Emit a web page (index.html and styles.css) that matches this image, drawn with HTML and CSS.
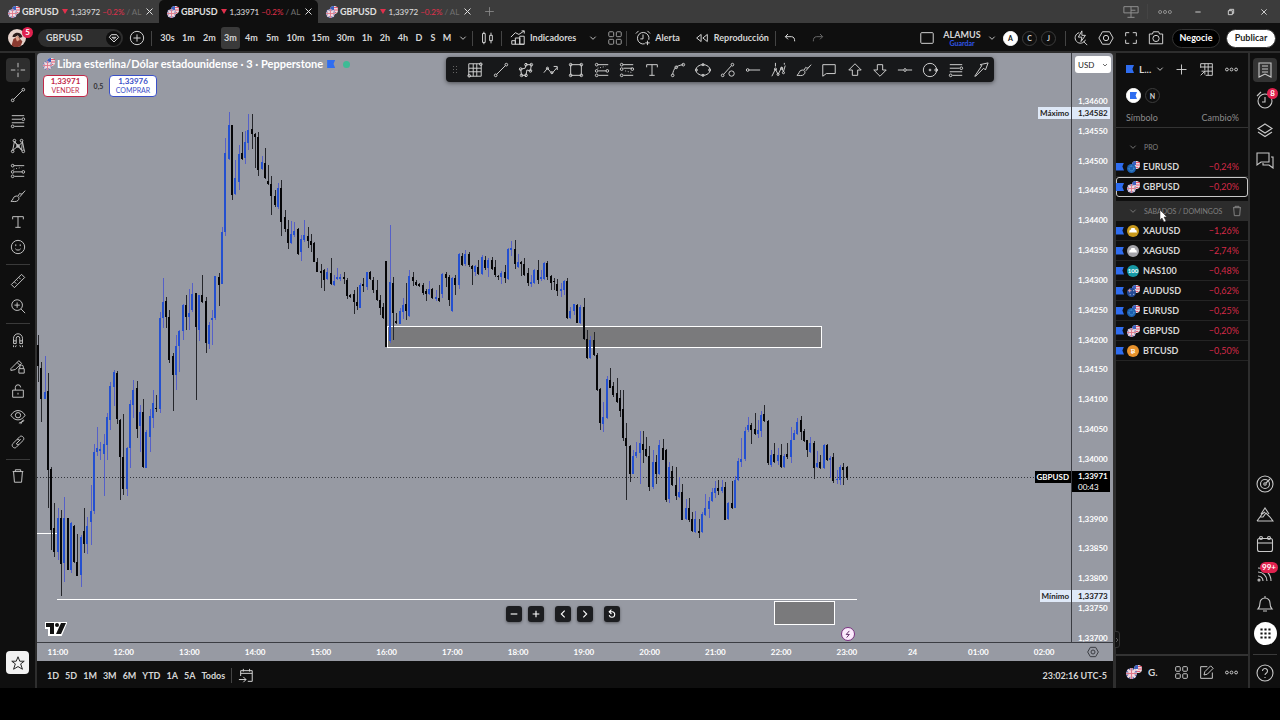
FILE: index.html
```html
<!DOCTYPE html>
<html lang="es">
<head>
    <meta charset="UTF-8">
    <meta name="viewport" content="width=device-width, initial-scale=1.0">
    <title>GBPUSD 1,33971</title>
    <link rel="stylesheet" href="styles.css">
</head>
<body>

<!-- Icon set -->
<svg class="sprite" aria-hidden="true">
    <symbol id="i-cross" viewBox="0 0 18 18"><path d="M9 1v5M9 12v5M1 9h5M12 9h5M9 8.500v1"/></symbol>
    <symbol id="i-line" viewBox="0 0 18 18"><path d="M4 14L14 4"/><circle cx="3" cy="15" r="1.500"/><circle cx="15" cy="3" r="1.500"/></symbol>
    <symbol id="i-fib" viewBox="0 0 18 18"><path d="M2 3h14M2 7h11M2 11h14M5 15h11"/><circle cx="15" cy="7" r="1.500"/><circle cx="3" cy="15" r="1.500"/></symbol>
    <symbol id="i-pattern" viewBox="0 0 18 18"><path d="M3 14L5 4l8 10 1-10 2 10M3 14l11-9M5 4l8 9"/><circle cx="3" cy="15" r="1.500"/><circle cx="5" cy="3" r="1.500"/><circle cx="13" cy="3" r="1.500"/><circle cx="15" cy="15" r="1.500"/><circle cx="9" cy="9" r="1.500"/></symbol>
    <symbol id="i-long" viewBox="0 0 18 18"><path d="M4 3h12M5 10h9M5 15h11"/><path d="M4 7l9-2" stroke-dasharray="1 2"/><circle cx="3" cy="3" r="1.500"/><circle cx="3" cy="10" r="1.500"/><circle cx="15" cy="10" r="1.500"/><circle cx="3" cy="15" r="1.500"/></symbol>
    <symbol id="i-short" viewBox="0 0 18 18"><path d="M4 3h12M5 7h10M5 15h11"/><path d="M7 10l8 2" stroke-dasharray="1 2"/><circle cx="3" cy="3" r="1.500"/><circle cx="3" cy="8" r="1.500"/><circle cx="15" cy="8" r="1.500"/><circle cx="3" cy="15" r="1.500"/></symbol>
    <symbol id="i-brush" viewBox="0 0 18 18"><path d="M1 15c3-1 2-6 6-6 3 0 4 3 2 5s-5 1-8 1zM9 9l2-3M11 10l6-7M11 6c1 1 2 1 3 0"/></symbol>
    <symbol id="i-text" viewBox="0 0 18 18"><path d="M3 6V3h12v3M9 3v12M6 15h6"/></symbol>
    <symbol id="i-smile" viewBox="0 0 18 18"><circle cx="9" cy="9" r="7.500"/><path d="M6 11c1 2 5 2 6 0M6.500 6v2M11.500 6v2"/></symbol>
    <symbol id="i-ruler" viewBox="0 0 18 18"><path d="M1.500 13L13 1.500 16.500 5 5 16.500zM5 10l2 2M7.500 7.500l1 1M10 5l2 2"/></symbol>
    <symbol id="i-zoom" viewBox="0 0 18 18"><circle cx="8" cy="8" r="6"/><path d="M12.500 12.500L17 17M8 5v6M5 8h6"/></symbol>
    <symbol id="i-magnet" viewBox="0 0 18 18"><path d="M4 13V7a5 5 0 0 1 10 0v6h-3V7a2 2 0 0 0-4 0v6zM4 10h3M11 10h3M4 15v2M7 15l-1 2M11 15l1 2M14 15v2"/></symbol>
    <symbol id="i-pencillock" viewBox="0 0 18 18"><path d="M1 12L10 3l3 3-7 7-5 1zM8 5l3 3"/><path d="M10 12h6v5h-6zM11 12v-2a2 2 0 0 1 4 0v2"/></symbol>
    <symbol id="i-lock" viewBox="0 0 18 18"><path d="M3 8h12v8H3zM6 8V5a3 3 0 0 1 6 0M9 11v2"/></symbol>
    <symbol id="i-eye" viewBox="0 0 18 18"><path d="M1 7c4-7 12-7 16 0-4 7-12 7-16 0z"/><circle cx="9" cy="7" r="3"/><path d="M10 16l6-3M12 17l3-5"/></symbol>
    <symbol id="i-link" viewBox="0 0 18 18"><path d="M7 11l5-5M8 6l3-3c2-2 6 1 4 4l-4 4c-1 1-3 1-4 0M10 12l-3 3c-2 2-6-1-4-4l4-4c1-1 3-1 4 0"/></symbol>
    <symbol id="i-trash" viewBox="0 0 18 18"><path d="M3 4h12M6 4V2h6v2M4 4l1 12h8l1-12"/></symbol>
    <symbol id="i-star" viewBox="0 0 18 18"><path d="M9 2l2 5h5l-4 3 2 6-5-3-5 3 2-6-4-3h5z"/></symbol>
    <symbol id="i-plus" viewBox="0 0 18 18"><path d="M9 3v12M3 9h12"/></symbol>
    <symbol id="i-minus" viewBox="0 0 18 18"><path d="M3 9h12"/></symbol>
    <symbol id="i-pluscircle" viewBox="0 0 18 18"><circle cx="9" cy="9" r="7.500"/><path d="M9 5v8M5 9h8"/></symbol>
    <symbol id="i-close" viewBox="0 0 18 18"><path d="M3 3l12 12M15 3L3 15"/></symbol>
    <symbol id="i-chev" viewBox="0 0 18 18"><path d="M3 6l6 6 6-6"/></symbol>
    <symbol id="i-left" viewBox="0 0 18 18"><path d="M12 3L6 9l6 6"/></symbol>
    <symbol id="i-right" viewBox="0 0 18 18"><path d="M6 3l6 6-6 6"/></symbol>
    <symbol id="i-reset" viewBox="0 0 18 18"><path d="M5 5h5a5 5 0 1 1-6 6M8 1L4 5l4 4"/></symbol>
    <symbol id="i-gem" viewBox="0 0 18 18"><path d="M5 4h8l3 4-7 7-7-7zM6 8h6l-3 3z"/></symbol>
    <symbol id="i-candles" viewBox="0 0 18 18"><path d="M4 4h3v10H4zM5.500 2v2M5.500 14v2M12 6h3v6h-3zM13.500 3v3M13.500 12v3"/></symbol>
    <symbol id="i-indic" viewBox="0 0 18 18"><path d="M2 16v-4h4v4M6 16V9h5v7M11 16V7h5v9zM2 16h14M1 8l5-5 4 2 6-4M13 1h3v3"/></symbol>
    <symbol id="i-four" viewBox="0 0 18 18"><rect x="2" y="2" width="5.500" height="5.500" rx="1"/><rect x="10.500" y="2" width="5.500" height="5.500" rx="1"/><rect x="2" y="10.500" width="5.500" height="5.500" rx="1"/><rect x="10.500" y="10.500" width="5.500" height="5.500" rx="1"/></symbol>
    <symbol id="i-alarm" viewBox="0 0 18 18"><path d="M11 15.500A6.500 6.500 0 1 1 15.500 11M9 5v5H6M1 4l3-3M14 1l3 3M14 12v5M11.500 14.500h5"/></symbol>
    <symbol id="i-replay" viewBox="0 0 18 18"><path d="M8 5L3 9l5 4zM15 5l-5 4 5 4z"/></symbol>
    <symbol id="i-undo" viewBox="0 0 18 18"><path d="M6 3L2 7l4 4M2 7h9c4 0 5 3 5 7"/></symbol>
    <symbol id="i-redo" viewBox="0 0 18 18"><path d="M12 3l4 4-4 4M16 7H7c-4 0-5 3-5 7"/></symbol>
    <symbol id="i-square" viewBox="0 0 18 18"><rect x="2" y="3" width="14" height="12" rx="1"/></symbol>
    <symbol id="i-search" viewBox="0 0 18 18"><path d="M7 3a6 6 0 1 0 7 8M12 13l4 4M10 1L6 8h4l-1 5 5-7h-4z"/></symbol>
    <symbol id="i-hex" viewBox="0 0 18 18"><path d="M5 2h8l4 7-4 7H5L1 9z"/><circle cx="9" cy="9" r="3"/></symbol>
    <symbol id="i-full" viewBox="0 0 18 18"><path d="M3 7V3h4M11 3h4v4M15 11v4h-4M7 15H3v-4"/></symbol>
    <symbol id="i-camera" viewBox="0 0 18 18"><path d="M1.500 4.500H5L6 2h6l1 2.500h3.500v11h-15z"/><circle cx="9" cy="9.500" r="3.500"/></symbol>
    <symbol id="i-grid" viewBox="0 0 18 18"><path d="M2 2h14v14H2zM2 7h14M2 11h14M7 2v14M11 2v14"/><circle cx="2.500" cy="15.500" r="1.500"/><circle cx="15.500" cy="2.500" r="1.500"/></symbol>
    <symbol id="i-poly" viewBox="0 0 18 18"><path d="M4 15l-1-7 5-1 1-4h6l-1 7-4-1-1 6z"/><circle cx="4" cy="15" r="1.500"/><circle cx="3" cy="8" r="1.500"/><circle cx="9" cy="3" r="1.500"/><circle cx="15" cy="3" r="1.500"/><circle cx="14" cy="10" r="1.500"/><circle cx="9" cy="15" r="1.500"/></symbol>
    <symbol id="i-zig" viewBox="0 0 18 18"><path d="M1 12l4-5 5 6 6-7M12 5h4v4"/><circle cx="5" cy="7" r="1.200"/><circle cx="10" cy="12" r="1.200"/></symbol>
    <symbol id="i-rect" viewBox="0 0 18 18"><path d="M3 3h12v12H3z"/><circle cx="3" cy="3" r="1.500"/><circle cx="15" cy="3" r="1.500"/><circle cx="3" cy="15" r="1.500"/><circle cx="15" cy="15" r="1.500"/></symbol>
    <symbol id="i-curve" viewBox="0 0 18 18"><path d="M3 14c1-7 4-10 12-11"/><circle cx="3" cy="15" r="1.500"/><circle cx="7" cy="6" r="1.500"/><circle cx="15" cy="3" r="1.500"/></symbol>
    <symbol id="i-ellipse" viewBox="0 0 18 18"><ellipse cx="9" cy="9" rx="8" ry="6"/><circle cx="9" cy="3" r="1.200"/><circle cx="9" cy="15" r="1.200"/><circle cx="1.500" cy="9" r="1.200"/><circle cx="16.500" cy="9" r="1.200"/></symbol>
    <symbol id="i-measure" viewBox="0 0 18 18"><path d="M4 14L13 4"/><circle cx="3" cy="15" r="1.500"/><circle cx="14" cy="3" r="1.500"/><circle cx="13" cy="13" r="3"/></symbol>
    <symbol id="i-ray" viewBox="0 0 18 18"><path d="M4 9h13"/><circle cx="3" cy="9" r="1.500"/></symbol>
    <symbol id="i-elliott" viewBox="0 0 18 18"><path d="M1 16l4-8 3 6 4-8 2 5 2-7M5 1v4M15 1v2"/><circle cx="5" cy="8" r="1.200"/><circle cx="8" cy="14" r="1.200"/><circle cx="12" cy="7" r="1.200"/><circle cx="14" cy="12" r="1.200"/></symbol>
    <symbol id="i-note" viewBox="0 0 18 18"><path d="M2 3h14v10H6l-4 3z"/></symbol>
    <symbol id="i-up" viewBox="0 0 18 18"><path d="M9 2l7 7h-4v6H6V9H2z"/></symbol>
    <symbol id="i-down" viewBox="0 0 18 18"><path d="M9 16l7-7h-4V3H6v6H2z"/></symbol>
    <symbol id="i-hline" viewBox="0 0 18 18"><path d="M1 9h6M11 9h6"/><circle cx="9" cy="9" r="1.500"/></symbol>
    <symbol id="i-target" viewBox="0 0 18 18"><circle cx="9" cy="9" r="7.500"/><circle cx="9" cy="9" r="1"/><circle cx="16" cy="9" r="1.500"/></symbol>
    <symbol id="i-arrow" viewBox="0 0 18 18"><path d="M2 16l8-12-2-1 9-2-3 8-2-2-9 9z"/></symbol>
    <symbol id="i-dots" viewBox="0 0 18 18"><circle cx="3.500" cy="9" r="1.700"/><circle cx="9" cy="9" r="1.700"/><circle cx="14.500" cy="9" r="1.700"/></symbol>
    <symbol id="i-table" viewBox="0 0 18 18"><path d="M2 7V2h14v14H8M2 6h14M7 2v8M11 2v14M7 11h9M2 16l5-5M3 11h4v4"/></symbol>
    <symbol id="i-list" viewBox="0 0 18 18"><path d="M3 2h12v14l-6-3-6 3zM6 5h6M6 8h6M6 11h6"/></symbol>
    <symbol id="i-clock" viewBox="0 0 18 18"><circle cx="9" cy="10" r="7"/><path d="M9 6v5H6M1 5l4-4"/></symbol>
    <symbol id="i-layers" viewBox="0 0 18 18"><path d="M9 3l7 4.500-7 4.500-7-4.500zM2 11l7 4.500 7-4.500"/></symbol>
    <symbol id="i-chat" viewBox="0 0 18 18"><path d="M1 2h12v9H5l-4 3zM15 6h2v11l-4-3H7v-2"/></symbol>
    <symbol id="i-radar" viewBox="0 0 18 18"><circle cx="9" cy="9" r="8"/><circle cx="9" cy="9" r="4.500"/><circle cx="9" cy="9" r="1.200"/><path d="M10 8l4-4"/></symbol>
    <symbol id="i-pine" viewBox="0 0 18 18"><path d="M1 16h16l-3-4-4-4-3 4-3 0-3 4M5 9l4-6 4 6M4 12l2-3 3-2"/></symbol>
    <symbol id="i-cal" viewBox="0 0 18 18"><rect x="1.500" y="3.500" width="15" height="13" rx="2"/><path d="M2 8h14"/><circle cx="5" cy="3" r="1.500"/><circle cx="13" cy="3" r="1.500"/></symbol>
    <symbol id="i-rss" viewBox="0 0 18 18"><path d="M2 11a5 5 0 0 1 5 5M2 7a9 9 0 0 1 9 9M2 3a13 13 0 0 1 13 13"/><circle cx="3" cy="15" r="1"/></symbol>
    <symbol id="i-bell" viewBox="0 0 18 18"><path d="M2 14c2-2 2-3 2-6a5 5 0 0 1 10 0c0 3 0 4 2 6zM7 16h4M9 1v2"/></symbol>
    <symbol id="i-apps" viewBox="0 0 18 18"><path d="M2 3.500h3M7.500 3.500h3M13 3.500h3M2 9h3M7.500 9h3M13 9h3M2 14.500h3M7.500 14.500h3M13 14.500h3" stroke-width="3"/></symbol>
    <symbol id="i-help" viewBox="0 0 18 18"><circle cx="9" cy="9" r="8"/><path d="M6.500 7a2.500 2.500 0 1 1 4 2c-1 .6-1.500 1-1.500 2M9 13v1"/></symbol>
    <symbol id="i-edit" viewBox="0 0 18 18"><path d="M10 2H2v14h14V9M6 12l1-4 7-7 3 3-7 7z"/></symbol>
    <symbol id="i-goto" viewBox="0 0 18 18"><path d="M3 9V3h13v12h-5M3 6h13M6 1v3M13 1v3M1 13h8M6 10l3 3-3 3"/></symbol>
    <symbol id="i-window" viewBox="0 0 18 18"><path d="M1 3h16v7H1zM9 3v12M5 15h8M9 7h5"/></symbol>
    <symbol id="i-restore" viewBox="0 0 18 18"><path d="M3 6h9v9H3zM6 6V3h9v9h-3"/></symbol>
    <symbol id="i-bolt" viewBox="0 0 18 18"><path d="M12 2L5 10h7l-6 7"/></symbol>
    <symbol id="f-us" viewBox="0 0 10 10"><circle cx="5" cy="5" r="5" fill="#f3e9ee"/><path d="M5 2h5M5 5h5M2 8h6" stroke="#e0455e" stroke-width="1.200"/><path d="M5 0a5 5 0 0 0-5 5h5z" fill="#3c5fc0"/></symbol>
    <symbol id="f-gb" viewBox="0 0 10 10"><circle cx="5" cy="5" r="5" fill="#5a6cb0"/><path d="M5 0v10M0 5h10M1.500 1.500l7 7M8.500 1.500l-7 7" stroke="#f5d9de" stroke-width="2"/><path d="M5 0v10M0 5h10" stroke="#e0788a"/></symbol>
    <symbol id="f-eu" viewBox="0 0 10 10"><circle cx="5" cy="5" r="5" fill="#1c5fb0"/><circle cx="5" cy="5" r="2.700" fill="none" stroke="#6cc0e8" stroke-dasharray="1 1"/></symbol>
    <symbol id="f-au" viewBox="0 0 10 10"><circle cx="5" cy="5" r="5" fill="#234a96"/><path d="M1 3h4M3 1v4" stroke="#e6a0ac"/><path d="M3 7.500h1M7 3h1M7 7h1" stroke="#fff"/></symbol>
</svg>

<div class="app">
    <header class="tabbar">
        <div class="tab">
            <span class="flags small"><svg><use href="#f-us"/></svg><svg><use href="#f-gb"/></svg></span>
            <b>GBPUSD</b><i class="tri"></i><span>1,33972</span><span class="red">−0.2%</span><span class="fade">/ AL</span>
            <button class="tab-close" aria-label="Cerrar"><svg class="icon"><use href="#i-close"/></svg></button>
        </div>
        <div class="tab active">
            <span class="flags small"><svg><use href="#f-us"/></svg><svg><use href="#f-gb"/></svg></span>
            <b>GBPUSD</b><i class="tri"></i><span>1,33971</span><span class="red">−0.2%</span><span class="fade">/ AL</span>
            <button class="tab-close" aria-label="Cerrar"><svg class="icon"><use href="#i-close"/></svg></button>
        </div>
        <div class="tab">
            <span class="flags small"><svg><use href="#f-us"/></svg><svg><use href="#f-gb"/></svg></span>
            <b>GBPUSD</b><i class="tri"></i><span>1,33972</span><span class="red">−0.2%</span><span class="fade">/ AL</span>
            <button class="tab-close" aria-label="Cerrar"><svg class="icon"><use href="#i-close"/></svg></button>
        </div>
        <button class="new-tab" aria-label="Nueva pestaña"><svg class="icon"><use href="#i-plus"/></svg></button>
        <div class="window-controls">
            <button aria-label="Ventanas"><svg class="icon"><use href="#i-window"/></svg></button>
            <span class="vsep"></span>
            <button aria-label="Más"><svg class="icon"><use href="#i-dots"/></svg></button>
            <button class="bright" aria-label="Minimizar"><svg class="icon tiny"><use href="#i-minus"/></svg></button>
            <button class="bright" aria-label="Restaurar"><svg class="icon tiny"><use href="#i-restore"/></svg></button>
            <button class="bright" aria-label="Cerrar"><svg class="icon tiny"><use href="#i-close"/></svg></button>
        </div>
    </header>

    <div class="toolbar">
        <button class="avatar" aria-label="Perfil"><svg viewBox="0 0 20 20"><circle cx="10" cy="10" r="10" fill="#e6d3cc"/><path d="M4 18l2-7 5-3 5 6-2 5c-4 2-8 1-10-1z" fill="#8b3a30"/><path d="M5 9c0-6 10-7 11 0l-3 1-2-3-3 2z" fill="#2b1d1c"/><path d="M8 9l3-1 2 4-3 2z" fill="#e0a48c"/></svg><span class="badge">5</span></button>
        <button class="symbol">GBPUSD<span class="gem"><svg class="icon small"><use href="#i-gem"/></svg></span></button>
        <button class="w28" aria-label="Comparar"><svg class="icon"><use href="#i-pluscircle"/></svg></button>
        <span class="vsep"></span>
        <div class="intervals">
            <button>30s</button><button>1m</button><button>2m</button><button class="on">3m</button><button>4m</button><button>5m</button>
            <button>10m</button><button>15m</button><button>30m</button><button>1h</button><button>2h</button><button>4h</button>
            <button>D</button><button>S</button><button>M</button>
        </div>
        <button class="w16" aria-label="Intervalos"><svg class="icon tiny"><use href="#i-chev"/></svg></button>
        <span class="vsep"></span>
        <button class="w28" aria-label="Velas"><svg class="icon"><use href="#i-candles"/></svg></button>
        <span class="vsep"></span>
        <button class="labelled"><svg class="icon"><use href="#i-indic"/></svg>Indicadores</button>
        <button class="w22" aria-label="Plantillas"><svg class="icon tiny"><use href="#i-chev"/></svg></button>
        <button class="w22 dim" aria-label="Diseños"><svg class="icon"><use href="#i-four"/></svg></button>
        <span class="vsep"></span>
        <button class="labelled"><svg class="icon"><use href="#i-alarm"/></svg>Alerta</button>
        <button class="labelled"><svg class="icon"><use href="#i-replay"/></svg>Reproducción</button>
        <span class="vsep"></span>
        <button class="w28" aria-label="Deshacer"><svg class="icon small"><use href="#i-undo"/></svg></button>
        <button class="w28 off" aria-label="Rehacer"><svg class="icon small"><use href="#i-redo"/></svg></button>
        <div class="toolbar-right">
            <button class="w28" aria-label="Configuración del gráfico"><svg class="icon"><use href="#i-square"/></svg></button>
            <button class="layout">ALAMUS<small>Guardar</small></button>
            <button class="w16" aria-label="Administrar"><svg class="icon tiny"><use href="#i-chev"/></svg></button>
            <button class="round filled">A</button>
            <button class="round">C</button>
            <button class="round">J</button>
            <span class="vsep"></span>
            <button class="w25" aria-label="Buscar"><svg class="icon"><use href="#i-search"/></svg></button>
            <button class="w25" aria-label="Ajustes"><svg class="icon"><use href="#i-hex"/></svg></button>
            <button class="w25" aria-label="Pantalla completa"><svg class="icon"><use href="#i-full"/></svg></button>
            <button class="w25" aria-label="Instantánea"><svg class="icon"><use href="#i-camera"/></svg></button>
            <button class="pill">Negocie</button>
            <button class="pill light">Publicar</button>
        </div>
    </div>

    <main class="workspace">
        <nav class="drawing">
            <div class="tools eight">
                <button class="on" aria-label="Cruz"><svg class="icon"><use href="#i-cross"/></svg></button>
                <button aria-label="Línea"><svg class="icon"><use href="#i-line"/></svg></button>
                <button aria-label="Fibonacci"><svg class="icon"><use href="#i-fib"/></svg></button>
                <button aria-label="Patrones"><svg class="icon"><use href="#i-pattern"/></svg></button>
                <button aria-label="Posición"><svg class="icon"><use href="#i-long"/></svg></button>
                <button aria-label="Pincel"><svg class="icon"><use href="#i-brush"/></svg></button>
                <button aria-label="Texto"><svg class="icon"><use href="#i-text"/></svg></button>
                <button aria-label="Iconos"><svg class="icon"><use href="#i-smile"/></svg></button>
            </div>
            <hr>
            <div class="tools two">
                <button aria-label="Medir"><svg class="icon"><use href="#i-ruler"/></svg></button>
                <button aria-label="Ampliar"><svg class="icon"><use href="#i-zoom"/></svg></button>
            </div>
            <hr>
            <div class="tools five">
                <button aria-label="Imán"><svg class="icon"><use href="#i-magnet"/></svg></button>
                <button aria-label="Mantener dibujo"><svg class="icon"><use href="#i-pencillock"/></svg></button>
                <button aria-label="Bloquear"><svg class="icon"><use href="#i-lock"/></svg></button>
                <button aria-label="Ocultar"><svg class="icon"><use href="#i-eye"/></svg></button>
                <button aria-label="Vincular"><svg class="icon"><use href="#i-link"/></svg></button>
            </div>
            <hr>
            <div class="tools">
                <button aria-label="Eliminar"><svg class="icon"><use href="#i-trash"/></svg></button>
            </div>
            <button class="favourite" aria-label="Favoritos"><svg class="icon"><use href="#i-star"/></svg></button>
        </nav>

        <section class="chart">
            <div class="pane">
                <svg class="plot" id="plot">
                    <rect class="zone" x="350.500" y="273.500" width="434" height="21"/>
                    <rect class="zone" x="737.500" y="548.500" width="60" height="23"/>
                    <path class="level" d="M0 480.500h20M20 546.500h800"/>
                    <line class="last" x1="0" x2="100%" y1="424.500" y2="424.500"/>
                    <g id="candles"></g>
                </svg>
                <div class="legend">
                    <h1><span class="flags small"><svg><use href="#f-us"/></svg><svg><use href="#f-gb"/></svg></span>Libra esterlina/Dólar estadounidense · 3 · Pepperstone<i class="flag"></i><i class="live"></i></h1>
                    <div class="quotes">
                        <button class="sell">1,33971<small>VENDER</small></button>
                        <span>0,5</span>
                        <button class="buy">1,33976<small>COMPRAR</small></button>
                    </div>
                </div>
                <svg class="logo" viewBox="0 0 22 14"><path d="M1 1h11v3h2V1h7l-5 12h-5V6H9v7H4V6H1z" fill="#fff" stroke="#fff" stroke-width="2"/><path d="M1 1h8v11H5V5H1zM16 1h5l-5 11h-5z" fill="#111"/><circle cx="12" cy="3" r="2" fill="#111"/></svg>
                <div class="nav-controls">
                    <button aria-label="Alejar"><svg class="icon tiny"><use href="#i-minus"/></svg></button>
                    <button aria-label="Acercar"><svg class="icon tiny"><use href="#i-plus"/></svg></button>
                    <button class="spaced" aria-label="Atrás"><svg class="icon tiny"><use href="#i-left"/></svg></button>
                    <button aria-label="Adelante"><svg class="icon tiny"><use href="#i-right"/></svg></button>
                    <button class="spaced" aria-label="Restablecer"><svg class="icon tiny"><use href="#i-reset"/></svg></button>
                </div>
                <button class="event" aria-label="Evento"><svg class="icon tiny"><use href="#i-bolt"/></svg></button>
                <span class="tag tag-max">Máximo</span>
                <span class="tag tag-last">GBPUSD</span>
                <span class="tag tag-min">Mínimo</span>
            </div>
            <div class="price-axis">
                <div class="currency">
                    <select aria-label="Divisa"><option>USD</option></select>
                    <svg class="icon tiny"><use href="#i-chev"/></svg>
                </div>
                <ol class="prices" id="prices"></ol>
                <span class="price price-max">1,34582</span>
                <span class="price price-last">1,33971<small>00:43</small></span>
                <span class="price price-min">1,33773</span>
            </div>
            <ol class="time-axis">
                <li>11:00</li><li>12:00</li><li>13:00</li><li>14:00</li><li>15:00</li><li>16:00</li><li>17:00</li><li>18:00</li>
                <li>19:00</li><li>20:00</li><li>21:00</li><li>22:00</li><li>23:00</li><li>24</li><li>01:00</li><li>02:00</li>
            </ol>
            <button class="axis-settings" aria-label="Ajustes de escala"><svg class="icon small"><use href="#i-hex"/></svg></button>
            <div class="favourites-bar">
                <span class="grip"></span>
                <button aria-label="Cuadrícula"><svg class="icon"><use href="#i-grid"/></svg></button>
                <button aria-label="Línea"><svg class="icon"><use href="#i-line"/></svg></button>
                <button aria-label="Polígono"><svg class="icon"><use href="#i-poly"/></svg></button>
                <button aria-label="Zigzag"><svg class="icon"><use href="#i-zig"/></svg></button>
                <button aria-label="Rectángulo"><svg class="icon"><use href="#i-rect"/></svg></button>
                <button aria-label="Posición larga"><svg class="icon"><use href="#i-long"/></svg></button>
                <button aria-label="Posición corta"><svg class="icon"><use href="#i-short"/></svg></button>
                <button aria-label="Texto"><svg class="icon"><use href="#i-text"/></svg></button>
                <button aria-label="Curva"><svg class="icon"><use href="#i-curve"/></svg></button>
                <button aria-label="Elipse"><svg class="icon"><use href="#i-ellipse"/></svg></button>
                <button aria-label="Línea informativa"><svg class="icon"><use href="#i-measure"/></svg></button>
                <button aria-label="Rayo"><svg class="icon"><use href="#i-ray"/></svg></button>
                <button aria-label="Elliott"><svg class="icon"><use href="#i-elliott"/></svg></button>
                <button aria-label="Pincel"><svg class="icon"><use href="#i-brush"/></svg></button>
                <button aria-label="Comentario"><svg class="icon"><use href="#i-note"/></svg></button>
                <button aria-label="Flecha arriba"><svg class="icon"><use href="#i-up"/></svg></button>
                <button aria-label="Flecha abajo"><svg class="icon"><use href="#i-down"/></svg></button>
                <button aria-label="Línea horizontal"><svg class="icon"><use href="#i-hline"/></svg></button>
                <button aria-label="Círculo"><svg class="icon"><use href="#i-target"/></svg></button>
                <button aria-label="Fibonacci"><svg class="icon"><use href="#i-fib"/></svg></button>
                <button aria-label="Flecha"><svg class="icon"><use href="#i-arrow"/></svg></button>
            </div>
        </section>

        <footer class="ranges">
            <button>1D</button><button>5D</button><button>1M</button><button>3M</button><button>6M</button><button>YTD</button><button>1A</button><button>5A</button><button>Todos</button>
            <span class="vsep"></span>
            <button aria-label="Ir a"><svg class="icon"><use href="#i-goto"/></svg></button>
            <time>23:02:16 UTC-5</time>
        </footer>

        <aside class="watchlist">
            <div class="list-head">
                <button class="list-name"><i class="flag"></i>L...<svg class="icon tiny"><use href="#i-chev"/></svg></button>
                <button aria-label="Añadir"><svg class="icon"><use href="#i-plus"/></svg></button>
                <button aria-label="Tabla"><svg class="icon"><use href="#i-table"/></svg></button>
                <button aria-label="Más"><svg class="icon"><use href="#i-dots"/></svg></button>
            </div>
            <div class="list-switch">
                <button class="round filled" aria-label="Azul"><i class="flag"></i></button>
                <button class="round">N</button>
            </div>
            <table>
                <thead><tr><th>Símbolo</th><th>Cambio%</th></tr></thead>
                <tbody id="watch"></tbody>
            </table>
            <div class="detail">
                <span class="flags"><svg><use href="#f-us"/></svg><svg><use href="#f-gb"/></svg></span><b>G.</b>
                <button aria-label="Diseño"><svg class="icon"><use href="#i-four"/></svg></button>
                <button aria-label="Editar"><svg class="icon"><use href="#i-edit"/></svg></button>
                <button aria-label="Más"><svg class="icon"><use href="#i-dots"/></svg></button>
            </div>
            <button class="collapse" aria-label="Contraer"><svg class="icon"><use href="#i-right"/></svg></button>
        </aside>

        <nav class="rail">
            <button class="on" aria-label="Lista"><svg class="icon"><use href="#i-list"/></svg></button>
            <button aria-label="Alertas"><svg class="icon"><use href="#i-clock"/></svg><span class="badge">8</span></button>
            <button aria-label="Objetos"><svg class="icon"><use href="#i-layers"/></svg></button>
            <button aria-label="Chats"><svg class="icon"><use href="#i-chat"/></svg></button>
            <span class="space"></span>
            <button aria-label="Screener"><svg class="icon"><use href="#i-radar"/></svg></button>
            <button aria-label="Pine"><svg class="icon"><use href="#i-pine"/></svg></button>
            <button aria-label="Calendario"><svg class="icon"><use href="#i-cal"/></svg></button>
            <button aria-label="Noticias"><svg class="icon"><use href="#i-rss"/></svg><span class="badge">99+</span></button>
            <button aria-label="Notificaciones"><svg class="icon"><use href="#i-bell"/></svg></button>
            <button class="apps" aria-label="Productos"><svg class="icon"><use href="#i-apps"/></svg></button>
            <hr>
            <button aria-label="Ayuda"><svg class="icon"><use href="#i-help"/></svg></button>
        </nav>
    </main>
</div>

<script src="chart.js"></script>
</body>
</html>
```
FILE: styles.css
```css
* {
    box-sizing: border-box;
}
body {
    margin: 0;
    background: #000;
    color: #d6d6d6;
    font-family: Lato, "Open Sans", sans-serif;
    font-size: 9px;
    line-height: 14px;
}
button, select {
    font: inherit;
    color: inherit;
    background: none;
    border: none;
    padding: 0;
    margin: 0;
    cursor: pointer;
}
button {
    display: flex;
    align-items: center;
    justify-content: center;
}
ol {
    list-style: none;
    margin: 0;
    padding: 0;
}
hr {
    width: 24px;
    height: 1px;
    margin: 5px 0 4px;
    border: none;
    background: #3a3a3a;
}
.sprite {
    position: absolute;
    width: 0;
    height: 0;
}
.icon {
    width: 16px;
    height: 16px;
    fill: none;
    stroke: currentColor;
    stroke-width: 1.1;
    flex: none;
}
.icon.small {
    width: 12px;
    height: 12px;
    stroke-width: 1.5;
}
.icon.tiny {
    width: 8px;
    height: 8px;
    stroke-width: 2;
    overflow: visible;
}
.vsep {
    width: 1px;
    height: 15px;
    background: #444;
    flex: none;
}
.flag {
    width: 8px;
    height: 8px;
    background: #2f6df0;
    clip-path: polygon(0 0, 100% 0, 80% 50%, 100% 100%, 0 100%);
    flex: none;
}
.flags {
    position: relative;
    width: 13px;
    height: 12px;
    flex: none;
}
.flags svg {
    position: absolute;
    width: 8px;
    height: 8px;
    top: 0;
    right: 0;
}
.flags svg:last-child {
    width: 9px;
    height: 9px;
    top: 3px;
    left: 0;
}
.flags.small {
    width: 12px;
}
.badge {
    position: absolute;
    min-width: 11px;
    height: 11px;
    padding: 0 2px;
    border-radius: 6px;
    background: #e0224f;
    color: #fff;
    font-size: 8px;
    line-height: 11px;
    font-weight: bold;
    text-align: center;
}
.app {
    display: flex;
    flex-direction: column;
    height: calc(100vh - 32px);
    background: #2e2e2e;
}

/* Tabs */
.tabbar {
    display: flex;
    align-items: stretch;
    height: 23px;
    background: #3c3c3c;
    flex: none;
}
.tab {
    display: flex;
    align-items: center;
    gap: 2px;
    width: 159px;
    padding: 0 5px 0 8px;
    color: #e0e0e0;
    font-size: 8px;
    white-space: nowrap;
}
.tab b {
    font-size: 9px;
}
.tab.active {
    background: #0f0f0f;
    border-radius: 5px 5px 0 0;
}
.tri {
    margin: 0 1px;
    border: 3px solid transparent;
    border-top: 5px solid #e0304c;
    border-bottom: none;
}
.red {
    color: #e0304c;
}
.fade {
    color: #707070;
}
.tab-close {
    margin-left: auto;
}
.tab-close .icon {
    width: 9px;
    height: 9px;
    stroke-width: 2;
}
.new-tab {
    width: 24px;
    color: #909090;
}
.new-tab .icon {
    width: 13px;
    height: 13px;
}
.window-controls {
    display: flex;
    align-items: center;
    margin-left: auto;
    color: #909090;
}
.window-controls button {
    width: 33px;
    height: 23px;
}
.window-controls .bright {
    color: #ddd;
}

/* Top toolbar */
.toolbar {
    display: flex;
    align-items: center;
    height: 28px;
    padding: 2px 4px 0 8px;
    margin-bottom: 2px;
    background: #0f0f0f;
    font-weight: bold;
    flex: none;
}
.toolbar button {
    height: 22px;
    flex: none;
}
.toolbar .avatar {
    position: relative;
    width: 30px;
    justify-content: flex-start;
}
.avatar svg {
    width: 18px;
    height: 18px;
}
.avatar .badge {
    top: 0;
    left: 14px;
}
.toolbar .symbol {
    width: 85px;
    height: 18px;
    padding: 0 2px 0 8px;
    justify-content: space-between;
    border-radius: 9px;
    background: #2e2e2e;
}
.gem {
    display: flex;
    align-items: center;
    justify-content: center;
    width: 15px;
    height: 15px;
    border-radius: 50%;
    background: #0f0f0f;
}
.w16 {
    width: 18px;
}
.w22 {
    width: 22px;
}
.w25 {
    width: 25px;
}
.w28 {
    width: 28px;
}
.dim {
    color: #a0a0a0;
}
.off {
    color: #666;
}
.intervals {
    display: grid;
    grid-template-columns: repeat(6, 21px) repeat(3, 25px) repeat(3, 18px) repeat(3, 14px);
    margin-left: 5px;
}
.intervals button {
    margin: 0 1px;
}
.intervals .on {
    background: #3a3a3a;
    border-radius: 3px;
}
.labelled {
    gap: 4px;
    padding: 0 6px 0 8px;
}
.toolbar-right {
    display: flex;
    align-items: center;
    margin-left: auto;
}
.toolbar .layout {
    flex-direction: column;
    width: 42px;
    line-height: 9px;
}
.layout small {
    color: #2f55e8;
    font-size: 7px;
    line-height: 8px;
}
.toolbar .round, .round {
    width: 15px;
    height: 15px;
    margin: 0 2px;
    border: 1px solid #3c3c3c;
    border-radius: 50%;
    font-size: 7px;
    font-weight: bold;
}
.toolbar .filled, .filled {
    background: #fff;
    color: #111;
    border-color: #fff;
}
.toolbar-right .vsep {
    margin: 0 2px 0 7px;
}
.toolbar .pill {
    width: 48px;
    height: 19px;
    margin-left: 4px;
    border: 1px solid #333;
    border-radius: 10px;
    background: #000;
    color: #fff;
}
.toolbar .light {
    width: 50px;
    margin-left: 6px;
    background: #fff;
    color: #222;
}

/* Workspace */
.workspace {
    flex: 1;
    min-height: 0;
    display: grid;
    grid-template-columns: 35px minmax(0, 1fr) 133px 30px;
    grid-template-rows: minmax(0, 1fr) 27px;
    column-gap: 2px;
}
.drawing {
    grid-row: 1 / 3;
    display: flex;
    flex-direction: column;
    align-items: center;
    padding: 5px 0 14px;
    background: #0f0f0f;
    color: #c4c4c4;
}
.tools {
    display: flex;
    flex-direction: column;
    justify-content: space-between;
}
.tools button {
    width: 24px;
    height: 24px;
    border-radius: 4px;
}
.tools .on {
    background: #2e2e2e;
}
.eight {
    height: 201px;
}
.two {
    height: 49px;
}
.five {
    height: 126px;
}
.favourite {
    width: 23px;
    height: 23px;
    margin-top: auto;
    border-radius: 4px;
    background: #f2f2f2;
    color: #222;
}

/* Chart */
.chart {
    position: relative;
    display: grid;
    grid-template-columns: minmax(0, 1fr) 41px;
    grid-template-rows: minmax(0, 1fr) 18px;
    background: #979aa3;
    border-radius: 4px 4px 0 0;
    color: #fff;
    font-weight: bold;
}
.pane {
    position: relative;
    border-right: 1px solid #3b3d43;
    border-bottom: 1px solid #3b3d43;
}
.plot {
    position: absolute;
    width: 100%;
    height: 100%;
}
.zone {
    fill: #7a7a7c;
    stroke: #fff;
}
.level {
    stroke: #fff;
}
.last {
    stroke: #33353b;
    stroke-dasharray: 1 2;
}
.bull {
    fill: #2450d0;
}
.bear {
    fill: #060608;
}
.bull-wick {
    fill: #5560c8;
}
.bear-wick {
    fill: #25262b;
}
.legend {
    position: relative;
    padding: 4px 6px;
}
.legend h1 {
    display: flex;
    align-items: center;
    gap: 2px;
    margin: 0;
    font-size: 11px;
    line-height: 14px;
}
.legend .flag {
    margin: 0 6px 0 2px;
}
.live {
    width: 7px;
    height: 7px;
    border-radius: 50%;
    background: #3dbb95;
}
.quotes {
    display: flex;
    align-items: center;
    gap: 5px;
    margin-top: 4px;
    color: #333;
    font-size: 7px;
}
.quotes button {
    flex-direction: column;
    height: 22px;
    width: 45px;
    border: 1px solid;
    border-radius: 4px;
    background: #fff;
    font-size: 8px;
    line-height: 9px;
}
.quotes .buy {
    width: 48px;
    color: #3a50c8;
}
.quotes small {
    font-size: 7px;
    font-weight: normal;
}
.quotes .sell {
    color: #c02848;
}
.quotes span {
    width: 11px;
    text-align: center;
}
.logo {
    position: absolute;
    left: 8px;
    bottom: 6px;
    width: 22px;
    height: 14px;
}
.nav-controls {
    position: absolute;
    left: 0;
    right: 0;
    bottom: 20px;
    display: flex;
    justify-content: center;
    gap: 6px;
    margin-left: 18px;
}
.nav-controls button {
    width: 16px;
    height: 16px;
    border-radius: 3px;
    background: #1c1d20;
    box-shadow: 0 1px 3px rgba(0, 0, 0, 0.4);
}
.nav-controls .spaced {
    margin-left: 5px;
}
.nav-controls .icon {
    width: 10px;
    height: 10px;
}
.event {
    position: absolute;
    left: 804px;
    bottom: 1px;
    width: 14px;
    height: 14px;
    border: 1px solid #7a2f80;
    border-radius: 50%;
    background: #fbeafc;
    color: #501a58;
}
.tag, .price {
    position: absolute;
    font-size: 8px;
    line-height: 12px;
}
.tag {
    right: 0;
    padding: 0 2px;
}
.tag-max, .tag-min, .price-max, .price-min {
    background: #dfe9f8;
    color: #222;
}
.tag-max, .price-max {
    top: 54px;
}
.tag-last, .price-last {
    top: 418px;
    background: #000;
}
.tag-min, .price-min {
    top: 537px;
}
.price-axis {
    position: relative;
    border-bottom: 1px solid #3b3d43;
}
.price {
    left: 0;
    width: 38px;
    padding-left: 6px;
}
.price-last {
    line-height: 11px;
}
.price small {
    display: block;
    font-size: 8px;
    line-height: 10px;
    font-weight: normal;
}
.currency {
    position: absolute;
    left: 3px;
    top: 3px;
    display: flex;
    align-items: center;
    width: 36px;
    height: 17px;
    border-radius: 3px;
    background: #fff;
    color: #222;
    font-size: 8px;
    font-weight: normal;
}
.currency select {
    appearance: none;
    width: 36px;
    height: 17px;
    padding-left: 3px;
}
.currency .icon {
    position: absolute;
    right: 3px;
    width: 6px;
    height: 6px;
    pointer-events: none;
}
.prices {
    display: flex;
    flex-direction: column;
    justify-content: space-between;
    height: 549px;
    margin-top: 42px;
    padding-left: 6px;
    font-size: 8px;
    line-height: 12px;
}
.prices li {
    height: 12px;
}
.time-axis {
    display: grid;
    grid-template-columns: repeat(16, 1fr);
    align-items: center;
    width: 1052px;
    margin-left: -12px;
    text-align: center;
    font-size: 8px;
}
.axis-settings {
    color: #3b3d43;
}
.favourites-bar {
    position: absolute;
    top: 4px;
    right: 119px;
    display: flex;
    align-items: center;
    justify-content: space-between;
    width: 548px;
    height: 25px;
    padding: 0 4px 0 6px;
    border-radius: 4px;
    background: #17181a;
    color: #d0d0d0;
    box-shadow: 0 1px 4px rgba(0, 0, 0, 0.5);
}
.favourites-bar button {
    width: 18px;
}
.grip {
    width: 5px;
    height: 9px;
    margin-right: 2px;
    background: radial-gradient(circle, #666 1px, transparent 1px) 0 0 / 3px 3px;
}
.ranges {
    grid-column: 2;
    grid-row: 2;
    display: flex;
    align-items: center;
    gap: 6px;
    padding: 2px 6px 0 10px;
    background: #0f0f0f;
    font-weight: bold;
}
.ranges time {
    margin-left: auto;
}

/* Watchlist */
.watchlist {
    position: relative;
    grid-column: 3;
    grid-row: 1 / 3;
    display: flex;
    flex-direction: column;
    margin-left: 1px;
    background: #0f0f0f;
}
.list-head {
    display: flex;
    align-items: center;
    justify-content: space-between;
    height: 32px;
    padding: 0 9px 0 10px;
}
.list-name {
    gap: 5px;
    font-size: 10px;
    font-weight: bold;
}
.list-switch {
    display: flex;
    align-items: center;
    height: 21px;
    padding-left: 8px;
}
.list-switch .flag {
    width: 7px;
    height: 7px;
}
table {
    width: 100%;
    border-spacing: 0;
    table-layout: fixed;
}
th, td {
    padding: 0;
    height: 20px;
    text-align: left;
}
th {
    height: 22px;
    padding: 3px 10px 0;
    border-bottom: 1px solid #333;
    color: #8c8c8c;
    font-weight: normal;
}
th:last-child, td.change {
    text-align: right;
    padding-right: 9px;
}
td {
    border-bottom: 1px solid #242424;
}
.instrument {
    display: flex;
    align-items: center;
    gap: 3px;
    font-weight: bold;
}
.instrument .coin {
    width: 12px;
    height: 12px;
    margin-right: 1px;
    border-radius: 50%;
    color: #fff;
    font-size: 6px;
    line-height: 12px;
    text-align: center;
}
.gold {
    background: #c99a1c;
}
.silver {
    background: #a4a4aa;
}
.teal {
    background: #1699a5;
}
.orange {
    background: #e8922c;
}
.bar {
    width: 8px;
    height: 5px;
    background: #fff;
    clip-path: polygon(30% 0, 70% 0, 75% 45%, 90% 45%, 100% 100%, 0 100%, 10% 45%, 25% 45%);
    display: inline-block;
}
.change {
    color: #d42a48;
}
.selected td {
    border-bottom: none;
}
.selected {
    outline: 1px solid #c8c8c8;
    outline-offset: -1px;
    border-radius: 3px;
}
.group td {
    border: none;
}
.group div {
    position: relative;
    display: flex;
    align-items: center;
    gap: 7px;
    height: 20px;
    margin-top: 4px;
    padding: 0 5px 0 13px;
    color: #808080;
    font-size: 7px;
    white-space: nowrap;
}
.group.first div {
    margin-top: 9px;
}
.group.hover div {
    background: #2c2c2c;
}
.group .icon.small {
    margin-left: auto;
}
.cursor {
    position: absolute;
    left: 43px;
    top: 8px;
    width: 9px;
    height: 13px;
}
.detail {
    display: flex;
    align-items: center;
    gap: 10px;
    height: 34px;
    margin-top: auto;
    padding: 0 9px 0 10px;
    border-top: 2px solid #333;
}
.detail .flags {
    width: 16px;
    height: 14px;
}
.detail .flags svg:last-child {
    width: 11px;
    height: 11px;
}
.detail b {
    margin: 0 6px 0 -4px;
    font-size: 10px;
}
.list-head .icon, .detail .icon {
    width: 15px;
    height: 15px;
}
.list-head .icon.tiny {
    width: 8px;
    height: 8px;
}
.collapse {
    position: absolute;
    left: -2px;
    bottom: 40px;
    width: 6px;
    height: 17px;
    border-radius: 0 3px 3px 0;
    background: #111;
    border: 1px solid #333;
}
.collapse .icon {
    width: 6px;
    height: 6px;
}

/* Right rail */
.rail {
    grid-column: 4;
    grid-row: 1 / 3;
    display: flex;
    flex-direction: column;
    align-items: center;
    padding-top: 2px;
    background: #0f0f0f;
    color: #c8c8c8;
}
.rail button {
    position: relative;
    width: 24px;
    height: 30px;
}
.rail .icon {
    width: 18px;
    height: 18px;
}
.rail .on {
    height: 24px;
    margin: 3px 0;
    border-radius: 4px;
    background: #333;
}
.rail .badge {
    top: 3px;
    right: -1px;
}
.rail .apps {
    width: 23px;
    height: 23px;
    margin: 3px 0;
    border-radius: 50%;
    background: #fff;
    color: #111;
}
.rail .apps .icon {
    width: 13px;
    height: 13px;
}
.rail hr {
    margin: 6px 0 3px;
}
.space {
    flex: 1;
}
```
FILE: chart.js
```js
// Each candle: direction, high, body top, body bottom, low
const candles = `k335,345,366,382 k362,368,399,422 b356,392,399,399 k373,391,470,508 k467,469,530,550 k503,528,552,557
b508,518,552,560 k510,518,564,596 b497,518,563,582 k518,518,570,570 b522,523,570,573 k525,526,562,563 k534,562,576,576
b535,537,575,587 k508,531,544,553 b517,526,544,554 b485,511,522,545 b444,452,511,514 b427,448,452,456 b442,449,451,460
b434,444,454,496 b413,417,445,460 b382,386,420,430 b370,372,387,406 k371,373,419,424 k419,420,457,500 k414,457,489,495
b447,448,489,496 b400,404,448,468 b380,390,405,418 k381,388,429,438 b405,412,426,452 k399,412,467,468 b430,432,468,468
b409,416,437,452 b390,403,418,428 k395,408,409,412 b312,318,409,413 b278,302,318,328 k297,301,317,328 k310,317,360,363
k353,356,375,411 b335,346,375,390 b330,331,346,372 b304,305,331,340 k295,305,317,330 b289,313,317,330 b283,294,310,312
k293,293,327,400 b295,295,330,341 k275,295,302,303 k297,301,343,353 b322,325,344,349 b310,318,320,345 b276,276,318,320
k273,277,285,306 b227,232,284,284 b138,153,232,236 b112,125,159,160 k125,125,195,200 b160,178,194,195 b145,154,182,190
k132,153,159,160 b131,142,158,164 b114,130,143,150 k114,129,134,149 k133,134,137,168 k132,137,170,176 b156,162,169,170
k148,163,178,179 k165,181,184,185 k176,184,196,215 k190,196,205,207 b183,188,207,209 k180,188,222,236 k210,217,229,232
k220,229,243,249 b221,234,243,244 b222,231,235,237 k228,229,254,255 b235,239,252,261 b220,235,240,242 k227,236,241,248
k234,241,245,252 k242,243,262,262 k258,262,272,272 k264,271,273,288 k269,270,280,291 b268,272,279,280 k258,273,284,285
b275,281,285,286 b268,277,279,280 b274,277,279,281 k272,277,279,284 k278,280,296,299 k294,295,297,298 k290,294,302,314
k287,302,306,310 b283,285,308,308 k278,284,286,292 b272,272,287,290 k271,272,279,280 k277,280,290,293 k280,290,300,301
k295,300,308,315 k303,307,318,319 k261,261,347,347 b225,282,341,343 k277,283,313,340 k313,321,323,324 b308,311,324,324
b298,305,312,319 k283,304,311,320 b270,276,316,317 k272,277,281,286 k280,282,285,286 k283,284,286,287 k283,285,293,295
k289,291,294,301 b281,289,294,295 k288,289,298,299 b290,297,299,301 k285,298,301,302 b273,274,294,298 k272,274,278,287
k275,277,300,306 b277,278,311,312 k275,278,285,295 b253,254,285,289 k253,256,265,266 b250,254,264,266 k252,254,265,267
k265,266,269,285 b265,266,272,276 k260,267,274,275 b255,257,274,275 k256,260,268,270 b258,260,268,277 k257,260,269,270
k260,267,275,277 k275,276,277,280 b271,273,277,284 k265,272,278,283 b248,249,279,280 b241,248,250,256 k240,249,264,269
b254,262,267,268 k261,262,264,276 k258,264,275,276 k268,273,283,286 b275,282,284,287 b269,270,283,284 k260,270,280,284
b270,277,279,281 b262,263,279,280 k261,263,277,280 k275,276,283,290 k278,281,282,290 k279,284,291,296 b283,289,291,297
b280,281,290,295 k278,281,318,319 b307,311,318,319 b304,304,311,315 k304,305,323,323 b305,307,323,324 k298,307,339,340
k330,339,358,359 b336,340,358,359 k332,340,355,356 k353,355,390,391 k388,389,423,430 b402,417,424,432 b376,379,418,419
k368,380,388,388 k382,386,395,397 k378,393,402,403 k390,398,411,417 k390,409,438,441 k423,438,446,500 k445,446,474,482
b450,456,474,474 b442,452,456,458 b431,443,453,484 k431,444,450,463 k437,449,456,457 k446,456,487,491 b450,462,487,489
k455,462,474,484 b440,445,474,475 k439,448,460,460 k449,450,500,502 b462,467,499,503 k466,471,485,486 k467,485,496,500
b477,492,497,498 k484,492,520,520 b499,508,519,520 k498,508,520,522 k512,519,531,532 b511,519,532,533 k519,531,533,538
b512,514,532,533 b494,508,515,516 b497,501,509,518 b488,492,501,502 b481,488,493,498 k480,488,491,495 b480,487,491,493
k482,487,520,520 b502,503,519,520 k481,503,508,509 b476,480,508,508 b458,461,480,481 b438,459,462,467 b427,431,459,461
b417,425,430,432 k423,425,430,444 k413,429,434,435 b420,430,434,438 b411,415,431,437 k405,414,421,422 k420,421,463,465
b450,455,465,467 k443,454,462,463 b448,455,461,465 k444,455,467,468 b454,456,467,468 k443,454,457,459 b427,440,457,463
b430,433,440,440 b418,422,434,435 k416,420,432,440 k429,431,441,442 k440,440,450,457 b437,443,452,453 k441,443,468,479
b451,463,467,468 k455,462,468,469 b444,445,468,469 k444,445,460,461 b456,458,460,478 k453,457,481,483 b470,479,480,484
b465,467,480,485 k463,467,470,485 k466,467,478,480`.split(/\s+/);

const STEP = 3.287;
const TOP = 53;

document.getElementById('candles').innerHTML = candles.map((c, i) => {
    const kind = c[0] === 'b' ? 'bull' : 'bear';
    const [high, top, bottom, low] = c.slice(1).split(',').map(n => n - TOP);
    const x = Math.round(1 + i * STEP);
    return `<rect class="${kind}-wick" x="${x}" y="${high}" width="1" height="${low - high}"/>` +
        `<rect class="${kind}" x="${x - 1}" y="${top}" width="2" height="${bottom - top}"/>`;
}).join('');

// Price scale, 50 points per label; the one under the last price tag stays empty
let labels = '';
for (let p = 134600; p >= 133700; p -= 50) {
    const text = '1,' + String(p).slice(1);
    labels += `<li>${p === 133950 ? '' : text}</li>`;
}
document.getElementById('prices').innerHTML = labels;

const pair = base => `<span class="flags"><svg><use href="#f-us"/></svg><svg><use href="#f-${base}"/></svg></span>`;
const coin = (colour, text) => `<span class="coin ${colour}">${text}</span>`;
const ingot = '<i class="bar"></i>';

const groups = [
    { name: 'PRO', rows: [['EURUSD', '−0,24%', pair('eu')], ['GBPUSD', '−0,20%', pair('gb'), 'selected']] },
    { name: 'SABADOS / DOMINGOS', hover: true, rows: [
        ['XAUUSD', '−1,26%', coin('gold', ingot)],
        ['XAGUSD', '−2,74%', coin('silver', ingot)],
        ['NAS100', '−0,48%', coin('teal', '100')],
        ['AUDUSD', '−0,62%', pair('au')],
        ['EURUSD', '−0,25%', pair('eu')],
        ['GBPUSD', '−0,20%', pair('gb')],
        ['BTCUSD', '−0,50%', coin('orange', '₿')]
    ] }
];

document.getElementById('watch').innerHTML = groups.map(g => {
    const extra = g.hover
        ? '<svg class="icon small"><use href="#i-trash"/></svg><svg class="cursor" viewBox="0 0 9 13"><path d="M1 1v10l2-2 2 4 2-1-2-4h3z" fill="#fff" stroke="#222" stroke-width="0.500"/></svg>'
        : '';
    return `<tr class="group ${g.hover ? 'hover' : 'first'}"><td colspan="2"><div><svg class="icon tiny"><use href="#i-chev"/></svg>${g.name}${extra}</div></td></tr>` +
        g.rows.map(([name, change, icon, cls = '']) =>
            `<tr class="${cls}"><td><div class="instrument"><i class="flag"></i>${icon}${name}</div></td><td class="change">${change}</td></tr>`).join('');
}).join('');
```
